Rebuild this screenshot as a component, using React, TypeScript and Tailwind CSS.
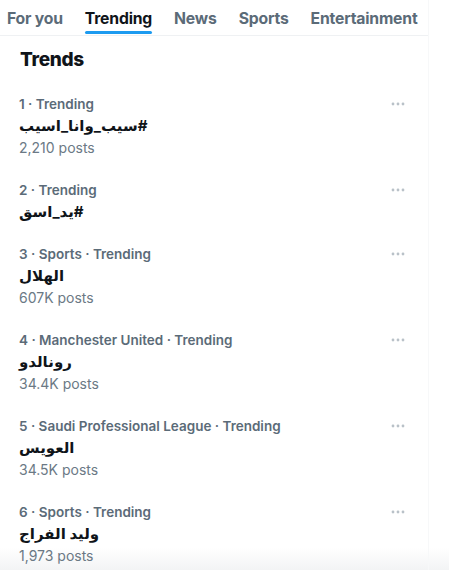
import { useState } from 'react';

type Trend = {
  rank: number;
  context: string;
  title: string;
  posts?: string;
};

const tabs = ['For you', 'Trending', 'News', 'Sports', 'Entertainment'];

const trends: Trend[] = [
  { rank: 1, context: 'Trending', title: '#سيب_وانا_اسيب', posts: '2,210 posts' },
  { rank: 2, context: 'Trending', title: '#يد_اسق' },
  { rank: 3, context: 'Sports · Trending', title: 'الهلال', posts: '607K posts' },
  { rank: 4, context: 'Manchester United · Trending', title: 'رونالدو', posts: '34.4K posts' },
  { rank: 5, context: 'Saudi Professional League · Trending', title: 'العويس', posts: '34.5K posts' },
  { rank: 6, context: 'Sports · Trending', title: 'وليد الفراج', posts: '1,973 posts' },
];

function MoreDots() {
  return (
    <svg width="14" height="4" viewBox="0 0 14 4" className="text-[#b9c1c8]" aria-hidden>
      <circle cx="2" cy="2" r="1.4" fill="currentColor" />
      <circle cx="7" cy="2" r="1.4" fill="currentColor" />
      <circle cx="12" cy="2" r="1.4" fill="currentColor" />
    </svg>
  );
}

export default function App() {
  const [active, setActive] = useState('Trending');

  return (
    <div className="w-[449px] h-[570px] overflow-hidden bg-gradient-to-b from-white from-[96%] to-[#f3f4f5] font-['Inter','DejaVu_Sans',sans-serif]">
      <div className="w-[429px] border-r border-[#f7f8f9]">
        {/* Tabs */}
        <div className="flex items-start gap-[22px] pl-[7px] border-b border-[#eff1f3] h-[36px]">
          {tabs.map((tab) => (
            <button
              key={tab}
              onClick={() => setActive(tab)}
              className={`relative h-full pt-[3px] text-[15.75px] leading-[22px] font-bold tracking-[-0.2px] ${
                active === tab ? 'text-[#0f1419]' : 'text-[#5b6b78]'
              }`}
            >
              {tab}
              {active === tab && (
                <span className="absolute left-0 right-0 bottom-[1px] h-[3px] rounded-full bg-[#1d9bf0]" />
              )}
            </button>
          ))}
        </div>

        {/* Heading */}
        <h2 className="px-[20px] py-[12px] text-[19px] leading-[23px] font-extrabold text-[#0f1419] tracking-[-0.3px]">
          Trends
        </h2>

        {/* Trend list */}
        <div>
          {trends.map((t) => (
            <div key={t.rank} className="flex items-start justify-between pl-[19px] pr-[23px] py-[10px]">
              <div className="flex flex-col">
                <div className="text-[13.5px] leading-[22px] font-semibold text-[#5b6b78]">
                  {t.rank} · {t.context}
                </div>
                <div dir="rtl" className="text-left text-[15px] leading-[22px] font-bold text-[#0f1419]">
                  {t.title}
                </div>
                {t.posts && (
                  <div className="text-[14px] leading-[22px] text-[#6b7985]">{t.posts}</div>
                )}
              </div>
              <div className="pt-[9px]">
                <MoreDots />
              </div>
            </div>
          ))}
        </div>
      </div>
    </div>
  );
}
